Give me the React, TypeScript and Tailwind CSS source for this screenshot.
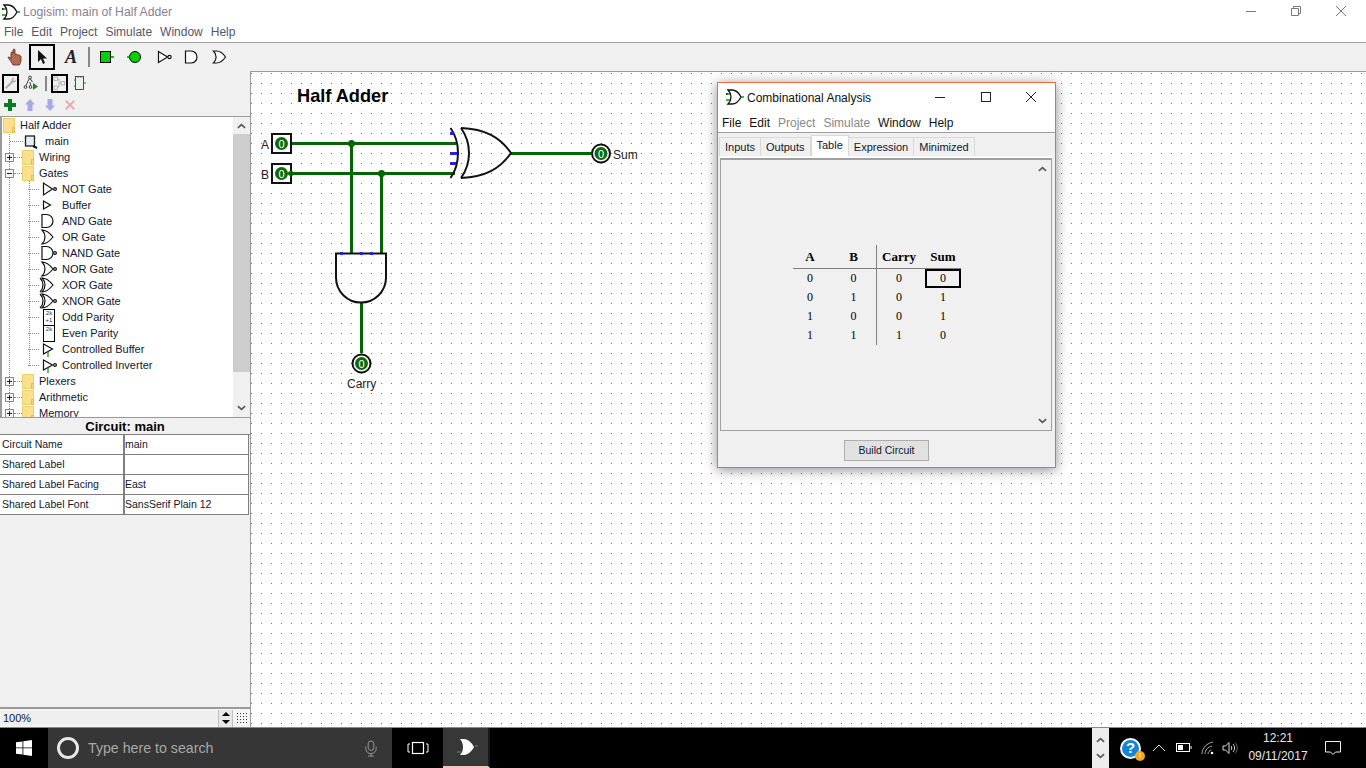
import type { ReactNode } from "react";

const ui = "font-['Liberation_Sans',Arial,sans-serif]";

function Logo({ className = "" }: { className?: string }) {
  return (
    <svg viewBox="0 0 18 16" className={`h-4 w-[18px] shrink-0 ${className}`} fill="none">
      <path d="M0 5h5M0 11h5" stroke="#0a9a0a" strokeWidth="1.5" />
      <path d="M0 5h1.500" stroke="#111" strokeWidth="1.5" />
      <path d="M2 1h4c4 0 7 3 9 7-2 4-5 7-9 7H2c2-2 3-4 3-7S4 3 2 1z" stroke="#111" strokeWidth="1.3" />
      <path d="M15 8h3" stroke="#0a9a0a" strokeWidth="1.5" />
    </svg>
  );
}

function WindowButtons({ small }: { small?: boolean }) {
  const stroke = small ? "#222" : "#777";
  return (
    <div className={small ? "flex w-[121px] items-center justify-between pr-[18px]" : "flex w-[121px] items-center justify-between pr-[19px]"}>
      <svg viewBox="0 0 12 12" className="h-3 w-3" fill="none">
        <path d="M1 6.5h10" stroke={stroke} />
      </svg>
      <svg viewBox="0 0 12 12" className="h-3 w-3" fill="none">
        {small ? (
          <rect x="1.5" y="1.5" width="9" height="9" stroke={stroke} />
        ) : (
          <path d="M1.5 3.5h7v7h-7zM3.5 3.5v-2h7v7h-2" stroke={stroke} />
        )}
      </svg>
      <svg viewBox="0 0 12 12" className="h-3 w-3" fill="none">
        <path d="M1 1l10 10M11 1L1 11" stroke={stroke} />
      </svg>
    </div>
  );
}

function ToolGate({ kind }: { kind: "not" | "and" | "or" }) {
  return (
    <svg viewBox="0 0 16 14" className="h-[14px] w-4" fill="white" stroke="#111" strokeWidth="1.2">
      {kind === "not" && (
        <>
          <path d="M1.5 1.5v11l9-5.5z" />
          <circle cx="12.5" cy="7" r="1.6" />
        </>
      )}
      {kind === "and" && <path d="M2.5 1h5.5a6 6 0 0 1 0 12H2.5z" />}
      {kind === "or" && <path d="M1.5 1h3c4 0 7 3 9 6-2 3-5 6-9 6h-3c2-2 2.6-4 2.6-6s-.6-4-2.6-6z" />}
    </svg>
  );
}

function TopToolbar() {
  return (
    <div className="flex h-[28px] items-center bg-[#f0f0f0] pl-[5px]">
      <svg viewBox="0 0 18 18" className="h-[18px] w-[18px]">
        <path
          d="M3 9.500c.8-.8 1.800-.3 3 1V5.200c0-1.600 2-1.600 2 0V2.200c0-1.500 2-1.500 2 0v4.300c1.200-.8 2.300-.3 2.500.5 1-.5 2-.2 2.300.8.700-.2 1.200.2 1.200 1V13l-1.500 4H8l-2-3.500z"
          fill="#b36a50"
          stroke="#54291c"
          strokeWidth=".8"
        />
      </svg>
      <div className="ml-[6px] flex h-[26px] w-[26px] items-center justify-center border-[2px] border-black">
        <svg viewBox="0 0 12 16" className="h-4 w-3">
          <path d="M2 1v12l3-3 2 5 2-1-2-4.500h4z" fill="#111" />
        </svg>
      </div>
      <span className="ml-[10px] w-[13px] font-['Liberation_Serif',serif] text-[18px] leading-none font-bold text-[#222] italic">A</span>
      <div className="ml-[10px] h-5 w-[2px] bg-[#888]" />
      <div className="ml-[10px] h-[12px] w-[11px] border border-black bg-[#08d008]" />
      <div className="h-[2px] w-[3px] bg-[#08d008]" />
      <div className="ml-[13px] h-[2px] w-[3px] bg-[#08d008]" />
      <div className="ml-[-1px] h-[12px] w-[12px] rounded-full border-[1.5px] border-black bg-[#08d008]" />
      <div className="ml-[16px]">
        <ToolGate kind="not" />
      </div>
      <div className="ml-[10px]">
        <ToolGate kind="and" />
      </div>
      <div className="ml-[13px]">
        <ToolGate kind="or" />
      </div>
    </div>
  );
}

function SideToolbar() {
  return (
    <>
      <div className="flex h-[24px] items-center bg-[#f0f0f0] pl-[2px]">
        <div className="flex h-[19px] w-[17px] items-center justify-center border-[2px] border-black">
          <svg viewBox="0 0 14 14" className="h-[14px] w-[14px]">
            <path d="M1 12l7-7c-.6-2 1-4 3.600-3.600L9.500 3.500 11 5l2-2c.3 2.500-1.600 4-3.600 3.400L2.500 13.500z" fill="#aaa" />
          </svg>
        </div>
        <svg viewBox="0 0 16 16" className="ml-[4px] h-4 w-4" fill="none" stroke="#111" strokeWidth=".8">
          <circle cx="7" cy="2.500" r="1.400" />
          <circle cx="2.500" cy="12" r="1.400" />
          <circle cx="7.500" cy="12" r="1.400" />
          <path d="M6 4L3 10.500M7.500 4l2 3M7 7l.5 3.500" />
          <path d="M10 8l5 3.500-5 3.500z" fill="#168a16" stroke="none" />
        </svg>
        <div className="ml-[6px] h-[15px] w-[2px] bg-[#888]" />
        <div className="ml-[4px] flex h-[19px] w-[17px] items-center justify-center border-[2px] border-black">
          <svg viewBox="0 0 13 15" className="h-[15px] w-[13px]" fill="none" stroke="#aaa" strokeWidth=".8">
            <rect x="1" y="1" width="3.500" height="3.500" />
            <rect x="1" y="10" width="3.500" height="3.500" />
            <rect x="8" y="5.500" width="3.500" height="3.500" />
            <path d="M4.500 3H6v8H4.500M6 7h2" />
          </svg>
        </div>
        <svg viewBox="0 0 12 16" className="ml-[6px] h-4 w-3" fill="none">
          <rect x="1.500" y="1.500" width="8" height="13" stroke="#222" strokeWidth=".8" />
          <path d="M0 5h2M0 11h2M10 8h2M4 1v2M7 1v2" stroke="#0a9a0a" />
        </svg>
      </div>
      <div className="flex h-[21px] items-start gap-[6px] bg-[#f0f0f0] pt-[3px] pl-[3px]">
        <svg viewBox="0 0 14 14" className="h-[14px] w-[14px]">
          <path d="M5 1h4v4h4v4H9v4H5V9H1V5h4z" fill="#0b7a22" />
        </svg>
        <svg viewBox="0 0 14 14" className="h-[14px] w-[14px]">
          <path d="M7 1l5 5.500H9.500V13h-5V6.500H2z" fill="#a8a8e8" />
        </svg>
        <svg viewBox="0 0 14 14" className="h-[14px] w-[14px]">
          <path d="M7 13L2 7.500h2.500V1h5v6.500H12z" fill="#a8a8e8" />
        </svg>
        <svg viewBox="0 0 14 14" className="h-[14px] w-[14px]">
          <path d="M2 3.500L3.500 2 7 5.500 10.500 2 12 3.500 8.500 7l3.500 3.500-1.500 1.500L7 8.500 3.500 12 2 10.500 5.500 7z" fill="#edacac" />
        </svg>
      </div>
    </>
  );
}

function Folder() {
  return (
    <div className="relative z-10 h-[15px] w-[12px] shrink-0 border border-[#eccf6a] bg-[#fde08f]">
      <div className="absolute right-[-1px] bottom-[-1px] h-[6px] w-[3px] border border-[#e6c04f] bg-[#fbd777]" />
    </div>
  );
}

function Expander({ open }: { open?: boolean }) {
  return (
    <div className="relative z-10 flex h-[9px] w-[9px] shrink-0 items-center justify-center border border-[#8a8a8a] bg-[#f4f4f4]">
      <div className="h-px w-[5px] bg-[#222]" />
      {!open && <div className="absolute h-[5px] w-px bg-[#222]" />}
    </div>
  );
}

type GateKind = "not" | "buf" | "and" | "or" | "nand" | "nor" | "xor" | "xnor" | "odd" | "even" | "cbuf" | "cinv";

function TreeGate({ kind }: { kind: GateKind }) {
  if (kind === "odd" || kind === "even") {
    return (
      <div className="relative z-10 ml-[4px] flex h-[17px] w-[12px] flex-col items-center border border-black bg-white font-['Liberation_Sans',sans-serif] text-[6px] leading-[7px] text-[#333]">
        <span>2k</span>
        {kind === "odd" && <span>+1</span>}
      </div>
    );
  }
  const or = "M3 1c3 0 7 2 11 7-4 5-8 7-11 7 2-2 3-4.500 3-7s-1-5-3-7z";
  const and = "M3 1.500h4.500a6.500 6.500 0 0 1 0 13H3z";
  const tri = "M4.500 2v12l9-6z";
  const small = "M4.500 4v8l7-4z";
  return (
    <svg viewBox="0 0 18 17" className="h-[17px] w-[18px] overflow-visible" fill="white" stroke="#111" strokeWidth="1.2">
      {kind === "not" && <path d={tri} />}
      {kind === "buf" && <path d={small} />}
      {kind === "and" && <path d={and} />}
      {kind === "or" && <path d={or} />}
      {kind === "nand" && <path d={and} />}
      {(kind === "nor" || kind === "xor" || kind === "xnor") && <path d={or} />}
      {(kind === "xor" || kind === "xnor") && <path d="M1 1c2 2 3 4.500 3 7s-1 5-3 7" fill="none" />}
      {(kind === "cbuf" || kind === "cinv") && <path d="M4.500 3v10l9-5z" />}
      {(kind === "cbuf" || kind === "cinv") && <path d="M9 11v5" stroke="#0a8a0a" />}
      {(kind === "not" || kind === "nor" || kind === "xnor" || kind === "cinv" || kind === "nand") && <circle cx="16" cy="8" r="1.4" />}
    </svg>
  );
}

const gates: [string, GateKind][] = [
  ["NOT Gate", "not"],
  ["Buffer", "buf"],
  ["AND Gate", "and"],
  ["OR Gate", "or"],
  ["NAND Gate", "nand"],
  ["NOR Gate", "nor"],
  ["XOR Gate", "xor"],
  ["XNOR Gate", "xnor"],
  ["Odd Parity", "odd"],
  ["Even Parity", "even"],
  ["Controlled Buffer", "cbuf"],
  ["Controlled Inverter", "cinv"],
];

function GroupRow({ label, open }: { label: string; open?: boolean }) {
  return (
    <div className="flex h-4 items-center pl-[3px]">
      <Expander open={open} />
      <div className="h-px w-[8px] border-t border-dotted border-[#888]" />
      <Folder />
      <span className="ml-[5px]">{label}</span>
    </div>
  );
}

function Tree() {
  return (
    <div className="relative flex h-[302px] border-y border-l-2 border-[#9a9a9a] bg-white">
      <div className="relative min-w-0 flex-1 overflow-hidden text-[11px] text-[#10182c]">
        <div className="absolute top-[14px] left-[7px] h-[290px] border-l border-dotted border-[#888]" />
        <div className="absolute top-[56px] left-[27px] h-[193px] border-l border-dotted border-[#888]" />
        <div className="flex h-4 items-center pl-px">
          <Folder />
          <span className="ml-[5px]">Half Adder</span>
        </div>
        <div className="flex h-4 items-center pl-[8px]">
          <div className="h-px w-[13px] border-t border-dotted border-[#888]" />
          <svg viewBox="0 0 15 15" className="h-[15px] w-[15px]" fill="none">
            <rect x="2.500" y="2" width="9" height="10" fill="#e8eef8" stroke="#111" strokeWidth="1.2" />
            <path d="M10 12l4 2" stroke="#111" strokeWidth="2" />
            <path d="M1.500 4h2M1.500 9h2M10.500 4h2M10.500 9h2" stroke="#0a9a0a" />
          </svg>
          <span className="ml-[7px]">main</span>
        </div>
        <GroupRow label="Wiring" />
        <GroupRow label="Gates" open />
        {gates.map(([label, kind]) => (
          <div key={label} className="flex h-4 items-center pl-[26px]">
            <div className="h-px w-[11px] border-t border-dotted border-[#888]" />
            <div className="flex w-[23px] justify-start">
              <TreeGate kind={kind} />
            </div>
            <span className="whitespace-nowrap">{label}</span>
          </div>
        ))}
        <GroupRow label="Plexers" />
        <GroupRow label="Arithmetic" />
        <GroupRow label="Memory" />
      </div>
      <ScrollBar thumbClass="h-[238px] mt-[17px] bg-[#cdcdcd]" />
    </div>
  );
}

function ScrollBar({ thumbClass }: { thumbClass?: string }) {
  return (
    <div className="relative flex w-[17px] shrink-0 flex-col bg-[#f0f0f0]">
      <svg viewBox="0 0 10 6" className="absolute top-[6px] left-1 h-[6px] w-[9px]" fill="none">
        <path d="M1 5l4-3.500L9 5" stroke="#555" strokeWidth="1.8" />
      </svg>
      {thumbClass && <div className={thumbClass} />}
      <svg viewBox="0 0 10 6" className="absolute bottom-[6px] left-1 h-[6px] w-[9px]" fill="none">
        <path d="M1 1l4 3.500L9 1" stroke="#555" strokeWidth="1.8" />
      </svg>
    </div>
  );
}

const attrs = [
  ["Circuit Name", "main"],
  ["Shared Label", ""],
  ["Shared Label Facing", "East"],
  ["Shared Label Font", "SansSerif Plain 12"],
];

function Attributes() {
  return (
    <div className="flex flex-1 flex-col bg-[#f0f0f0] text-[#10182c]">
      <div className="h-[16px] pt-px text-center text-[13px] leading-[16px] font-bold text-black">Circuit: main</div>
      <div className="grid grid-cols-[125px_124px] border-t border-[#808080] text-[10.5px] leading-[19px]">
        {attrs.map(([name, value]) => (
          <div key={name} className="contents">
            <div className="h-5 border-r-2 border-b border-[#808080] bg-white pl-[2px]">{name}</div>
            <div className="h-5 border-r border-b border-[#808080] bg-white">{value}</div>
          </div>
        ))}
      </div>
    </div>
  );
}

function ZoomBar() {
  return (
    <div className="flex h-[20px] items-center border-t-2 border-[#9a9a9a] bg-[#f5f5f5] text-[11px] text-[#10182c]">
      <div className="ml-px flex h-[14px] w-[217px] items-center bg-[#efefef] pl-[2px]">100%</div>
      <div className="flex h-[17px] w-[15px] flex-col items-center justify-around border-x border-[#c0c0c0] bg-[#e8e8e8]">
        <div className="h-0 w-0 border-x-[4px] border-b-[4px] border-x-transparent border-b-black" />
        <div className="h-0 w-0 border-x-[4px] border-t-[4px] border-x-transparent border-t-black" />
      </div>
      <svg viewBox="0 0 12 12" className="ml-[3px] h-3 w-3" fill="#333">
        {[1, 4, 7, 10].map((x) =>
          [1, 4, 7, 10].map((y) => <rect key={`${x}-${y}`} x={x} y={y} width="1" height="1" />),
        )}
      </svg>
    </div>
  );
}

function Pin({ x, y, r = 6.5 }: { x: number; y: number; r?: number }) {
  return (
    <>
      <circle cx={x} cy={y} r={r} fill="#0a6b0a" />
      <text x={x} y={y + 4} textAnchor="middle" fontSize="11" fontFamily="Liberation Sans" fill="#fff">
        0
      </text>
    </>
  );
}

function Circuit() {
  const wire = "#066306";
  const label = { fontFamily: "Liberation Sans", fontSize: 12, fill: "#222" };
  return (
    <svg viewBox="251 72 1115 655" className="absolute inset-0 h-full w-full">
      <defs>
        <pattern id="dots" x="261" y="83" width="10" height="10" patternUnits="userSpaceOnUse">
          <rect width="1" height="1" fill="#777" />
        </pattern>
      </defs>
      <rect x="251" y="72" width="1115" height="655" fill="url(#dots)" />
      <text x="297" y="102" fontFamily="Liberation Sans" fontSize="18.2" fontWeight="700" fill="#000">
        Half Adder
      </text>
      <text x="261" y="149" {...label}>A</text>
      <text x="261" y="179" {...label}>B</text>
      <text x="613" y="159" {...label}>Sum</text>
      <text x="347" y="388" {...label}>Carry</text>

      <g stroke={wire} strokeWidth="3" fill="none">
        <path d="M291 143.500H456M291 173.500H455M351.500 143V254M381.500 173V254M511 153.500H596M361.500 303V353" />
      </g>
      <circle cx="351.5" cy="143.5" r="3.5" fill={wire} />
      <circle cx="381.5" cy="173.5" r="3.5" fill={wire} />

      <rect x="272" y="134" width="19" height="19" fill="white" stroke="#111" strokeWidth="2" />
      <rect x="272" y="164" width="19" height="19" fill="white" stroke="#111" strokeWidth="2" />
      <Pin x={281.5} y={143.5} />
      <Pin x={281.5} y={173.5} />
      <path d="M287 173.500l4-3.500 4 3.500-4 3.500z" fill={wire} />
      <circle cx="601" cy="153.5" r="9" fill="white" stroke="#111" strokeWidth="2" />
      <Pin x={601} y={153.5} />
      <circle cx="361.5" cy="363.5" r="9" fill="white" stroke="#111" strokeWidth="2" />
      <Pin x={361.5} y={363.5} />

      <g stroke="#111" strokeWidth="2" fill="none">
        <path d="M450.500 128c5 7 7.500 16 7.500 25s-2.500 18-7.500 25" />
        <path d="M461 128c5 7 8 16 8 25s-3 18-8 25" />
        <path d="M461 128c24 1 39 9 50 25-11 16-26 24-50 25" />
        <path d="M336 253.500h50v24a25 25 0 0 1-50 0z" />
      </g>
      <g fill="#2222e0">
        <rect x="450" y="132" width="4" height="3" />
        <rect x="450" y="152" width="7" height="3" />
        <rect x="450" y="162" width="6" height="3" />
        <rect x="340" y="252" width="3" height="3" />
        <rect x="360" y="252" width="3" height="3" />
        <rect x="370" y="252" width="3" height="3" />
      </g>
    </svg>
  );
}

const header = ["A", "B", "Carry", "Sum"];
const rows = [
  ["0", "0", "0", "0"],
  ["0", "1", "0", "1"],
  ["1", "0", "0", "1"],
  ["1", "1", "1", "0"],
];

function TruthTable() {
  const cols = ["w-[38px] pr-1", "w-[46px] border-r border-[#808080]", "w-[48px] pr-1", "w-[36px]"];
  return (
    <div className="font-['Liberation_Serif',serif] text-[12px] text-black">
      <div className="flex h-[23px] items-center border-b border-[#808080] text-[13px] font-bold">
        {header.map((h, i) => (
          <div key={h} className={`flex h-[23px] items-end justify-center pb-[2px] ${cols[i]}`}>
            {h}
          </div>
        ))}
      </div>
      {rows.map((row, r) => (
        <div key={r} className="flex h-[19px]">
          {row.map((v, c) => (
            <div
              key={c}
              className={`flex items-center justify-center ${cols[c]} ${r === 0 && c === 3 ? "border-2 border-black" : ""}`}
            >
              {v}
            </div>
          ))}
        </div>
      ))}
    </div>
  );
}

function AnalysisWindow() {
  const tabs = ["Inputs", "Outputs", "Table", "Expression", "Minimized"];
  const menu: [string, boolean][] = [
    ["File", true],
    ["Edit", true],
    ["Project", false],
    ["Simulate", false],
    ["Window", true],
    ["Help", true],
  ];
  return (
    <div className="absolute top-[10px] left-[466px] flex h-[386px] w-[339px] flex-col border border-[#f0693c] bg-[#f0f0f0] shadow-[0_2px_12px_rgba(0,0,0,0.45)]">
      <div className="flex h-[28px] items-center justify-between bg-white pl-[8px]">
        <div className="flex items-center gap-[3px] text-[12px] text-[#111]">
          <Logo />
          <span className="pt-px">Combinational Analysis</span>
        </div>
        <WindowButtons small />
      </div>
      <div className="flex h-[22px] items-center gap-[8px] border-b border-[#a0a0a0] bg-white pt-[3px] pl-[4px] text-[12px] text-[#111]">
        {menu.map(([m, on]) => (
          <span key={m} className={on ? "" : "text-[#888]"}>
            {m}
          </span>
        ))}
      </div>
      <div className="flex h-[23px] items-end pl-[1px] text-[11px] text-[#10182c]">
        {tabs.map((t) =>
          t === "Table" ? (
            <div key={t} className="flex h-[21px] items-center border-x border-t border-[#d9d9d9] bg-white px-[5px] pb-[2px]">
              {t}
            </div>
          ) : (
            <div key={t} className="flex h-[19px] items-center border-t border-r border-[#d9d9d9] bg-[#f0f0f0] px-[5px] pt-px first:border-l">
              {t}
            </div>
          ),
        )}
      </div>
      <div className="mr-[3px] ml-[2px] h-[2px] bg-white" />
      <div className="mr-[3px] ml-[2px] flex h-[273px] border border-t-2 border-[#a0a0a0] bg-[#f0f0f0]">
        <div className="flex flex-1 items-center pl-[72px]">
          <TruthTable />
        </div>
        <ScrollBar />
      </div>
      <div className="flex flex-1 items-center justify-center pt-[3px]">
        <div className="flex h-[21px] w-[85px] items-center justify-center border border-[#adadad] bg-[#e1e1e1] text-[10.5px] text-[#10182c]">
          Build Circuit
        </div>
      </div>
    </div>
  );
}

function Tray({ children, className = "" }: { children: ReactNode; className?: string }) {
  return <div className={`flex items-center justify-center ${className}`}>{children}</div>;
}

function Taskbar() {
  return (
    <div className="flex h-[41px] items-stretch border-t border-[#888] bg-black text-white">
      <Tray className="w-[48px]">
        <svg viewBox="0 0 16 16" className="h-4 w-4" fill="#fff">
          <path d="M0 2.300l6.500-.9V7.500H0zM7.300 1.300L16 0v7.500H7.300zM0 8.300h6.500v6.300L0 13.700zM7.300 8.300H16V16l-8.700-1.200z" />
        </svg>
      </Tray>
      <div className="flex w-[344px] items-center bg-[#363636] pl-[9px]">
        <div className="h-[22px] w-[22px] rounded-full border-[3px] border-[#e8e8e8]" />
        <span className="ml-[9px] pt-[2px] text-[14.2px] text-[#a8a8a8]">Type here to search</span>
        <svg viewBox="0 0 14 18" className="mr-[14px] ml-auto h-[17px] w-[14px]" fill="none" stroke="#999" strokeWidth="1">
          <rect x="4" y="1" width="6" height="10" rx="3" />
          <path d="M1.500 7v2a5.500 5.500 0 0 0 11 0V7M7 14.500V17M4 17h6" />
        </svg>
      </div>
      <Tray className="w-[51px]">
        <svg viewBox="0 0 22 14" className="h-[14px] w-[22px]" fill="none" stroke="#fff">
          <rect x="5.500" y="1.500" width="11" height="11" strokeWidth="1.200" />
          <path d="M3 3H1v8h2M19 3h2v8h-2" />
        </svg>
      </Tray>
      <div className="flex w-[47px] items-center justify-center border-r-2 border-b-2 border-r-[#1a1a1a] border-b-[#f7c6b0] bg-[#373737] pl-[3px]">
        <svg viewBox="0 0 24 18" className="h-[18px] w-6">
          <path d="M5 1h4c4 0 8 4 10 8-2 4-6 8-10 8H5c2-2 3-5 3-8s-1-6-3-8z" fill="#fff" />
          <path d="M2 14h4M20 8h3" stroke="#1f9a1f" strokeWidth="1.500" />
        </svg>
      </div>
      <div className="flex-1" />
      <div className="flex w-[17px] flex-col items-center justify-around bg-[#ededed] py-1">
        <svg viewBox="0 0 10 6" className="h-[6px] w-[9px]" fill="none">
          <path d="M1 5l4-3.500L9 5" stroke="#555" strokeWidth="1.800" />
        </svg>
        <svg viewBox="0 0 10 6" className="h-[6px] w-[9px]" fill="none">
          <path d="M1 1l4 3.500L9 1" stroke="#555" strokeWidth="1.800" />
        </svg>
      </div>
      <Tray className="relative ml-[10px] w-[23px]">
        <div className="flex h-[21px] w-[21px] items-center justify-center rounded-full border-2 border-white bg-[#1384d8] text-[15px] font-bold text-white">?</div>
        <div className="absolute right-[-3px] bottom-[7px] flex h-[10px] w-[10px] items-center justify-center rounded-full bg-[#f7a51e] text-[8px] leading-none">!</div>
      </Tray>
      <Tray className="ml-[10px] w-[14px]">
        <svg viewBox="0 0 14 8" className="h-2 w-[14px]" fill="none" stroke="#ddd">
          <path d="M1 7l6-6 6 6" />
        </svg>
      </Tray>
      <Tray className="ml-[10px] w-[16px]">
        <svg viewBox="0 0 16 10" className="h-[10px] w-4" fill="none" stroke="#fff">
          <rect x=".5" y=".5" width="13" height="8" />
          <rect x="2" y="2" width="5" height="5" fill="#fff" stroke="none" />
          <path d="M15 3v3" />
        </svg>
      </Tray>
      <Tray className="ml-[9px] w-[14px]">
        <svg viewBox="0 0 14 14" className="h-[14px] w-[14px]" fill="none" stroke="#aaa">
          <path d="M1 13C1 7 6 2 12 1M4 13c0-4 3-7 7-8M7 13c0-2 1.500-3.500 3.500-4" />
          <circle cx="11" cy="12" r="1.300" fill="#fff" stroke="none" />
        </svg>
      </Tray>
      <Tray className="ml-[7px] w-[16px]">
        <svg viewBox="0 0 16 14" className="h-[14px] w-4" fill="none" stroke="#ddd">
          <path d="M1 5v4h2.500L7 12.500v-11L3.500 5zM9 5c1 1 1 3 0 4M11 3c2 2 2 6 0 8" />
          <path d="M13 1.500c3 3 3 8 0 11" stroke="#666" />
        </svg>
      </Tray>
      <div className="ml-[4px] flex w-[72px] flex-col items-center justify-center pb-[2px] text-[12px] leading-[18px] text-[#e8e8e8]">
        <span>12:21</span>
        <span>09/11/2017</span>
      </div>
      <Tray className="w-[52px] pr-[14px]">
        <svg viewBox="0 0 16 16" className="h-4 w-4" fill="none" stroke="#eee">
          <path d="M.5 1.500h15v10.500h-5l-2.500 2.500-2.500-2.500h-5z" />
        </svg>
      </Tray>
    </div>
  );
}

export default function App() {
  const menu = ["File", "Edit", "Project", "Simulate", "Window", "Help"];
  return (
    <div className={`flex h-[768px] w-[1366px] flex-col overflow-hidden bg-white ${ui}`}>
      <div className="flex h-[21px] items-center justify-between pl-[2px]">
        <div className="flex items-center gap-[3px] pt-[3px] text-[12.2px] text-[#8a8090]">
          <Logo />
          <span>Logisim: main of Half Adder</span>
        </div>
        <WindowButtons />
      </div>
      <div className="flex h-[22px] items-center gap-[8px] border-b border-[#a0a0a0] pl-[4px] text-[12px] text-[#556]">
        {menu.map((m) => (
          <span key={m}>{m}</span>
        ))}
      </div>
      <TopToolbar />
      <div className="flex min-h-0 flex-1">
        <aside className="flex w-[250px] shrink-0 flex-col">
          <SideToolbar />
          <Tree />
          <Attributes />
          <ZoomBar />
        </aside>
        <main className="relative flex-1 border-t border-l border-[#9a9a9a] bg-white">
          <Circuit />
          <AnalysisWindow />
        </main>
      </div>
      <Taskbar />
    </div>
  );
}
